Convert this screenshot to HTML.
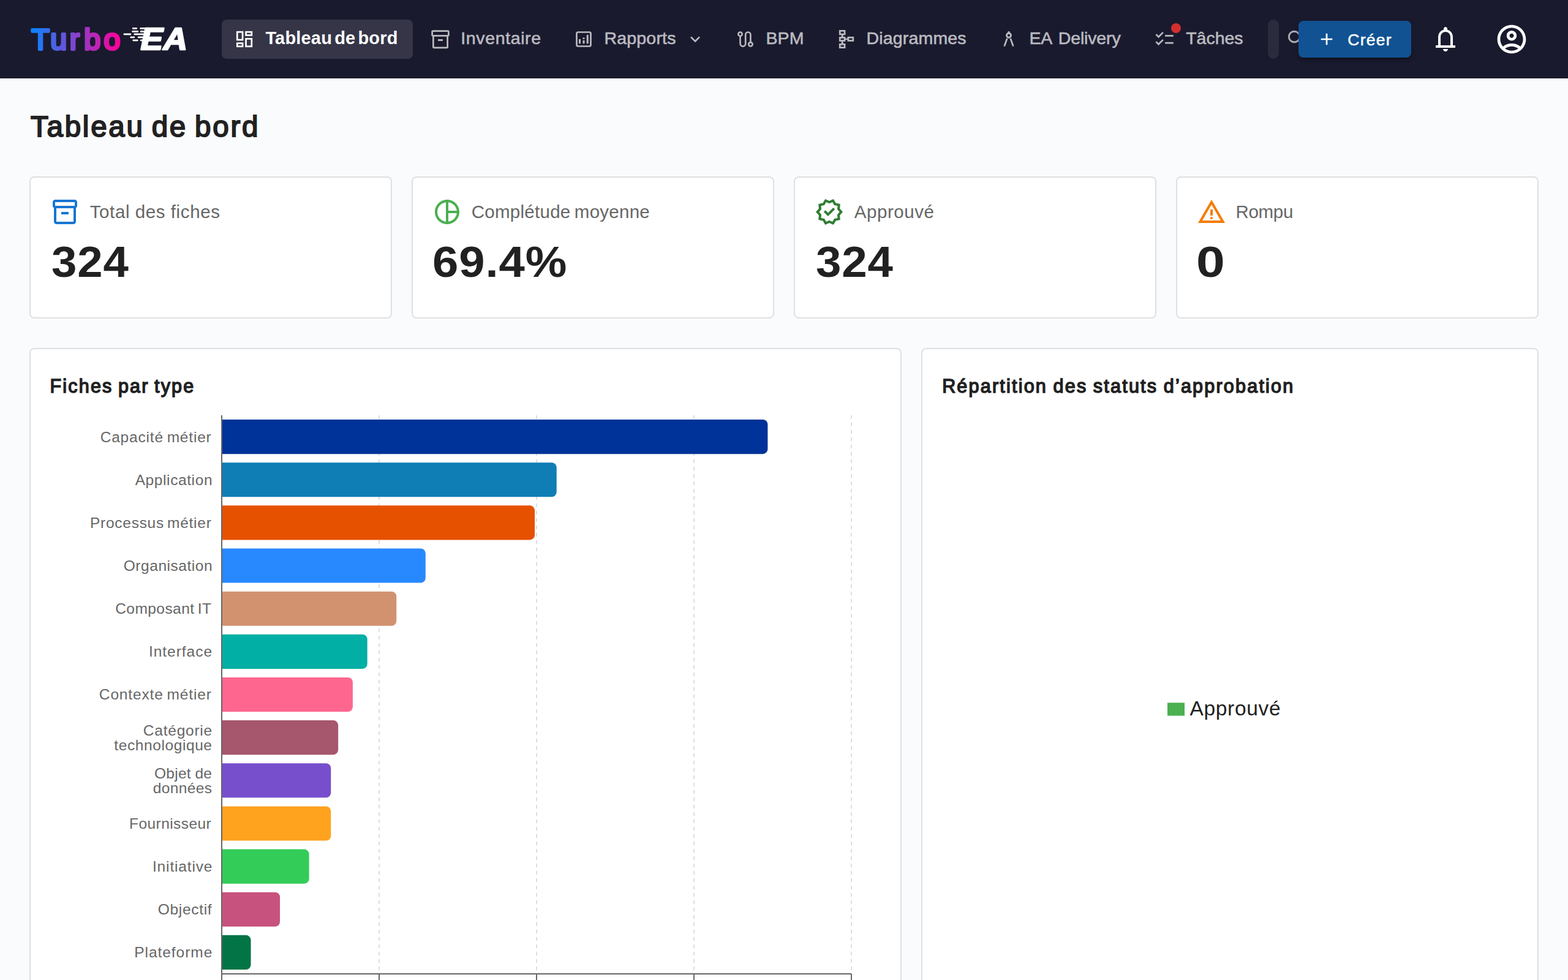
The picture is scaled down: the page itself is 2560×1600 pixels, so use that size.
<!DOCTYPE html>
<html lang="fr">
<head>
<meta charset="utf-8">
<title>Turbo EA – Tableau de bord</title>
<style>
*{box-sizing:border-box;margin:0;padding:0}
html,body{width:2560px;height:1600px;overflow:hidden}
@media (max-width:1500px){html{zoom:.5}}
body{position:relative;background:#fafbfc;font-family:"Liberation Sans",sans-serif;color:#212121;-webkit-font-smoothing:antialiased}
.t{position:absolute;white-space:nowrap;display:block;font-weight:400}
.ic{position:absolute;display:block}
a{text-decoration:none;color:inherit}
header{position:absolute;left:0;top:0;width:2560px;height:128px;background:#1a1a2e;color:#fff}
.logo{position:absolute;left:40px;top:24px;width:280px;height:80px}
.logo svg{display:block}
nav a{position:absolute;top:32px;height:64px;border-radius:8px}
nav a.active{background:rgba(255,255,255,.12)}
.badge{position:absolute;width:16px;height:16px;border-radius:50%;background:#d32f2f}
.pill{position:absolute;left:2070px;top:32px;width:18px;height:64px;border-radius:9px;background:rgba(255,255,255,.08)}
.create{position:absolute;left:2120px;top:34px;width:184px;height:60px;border:0;border-radius:8px;background:#115293;color:#fff;
 box-shadow:0 6px 2px -4px rgba(0,0,0,.2),0 4px 4px 0 rgba(0,0,0,.14),0 2px 10px 0 rgba(0,0,0,.12);font-family:inherit}
main{position:absolute;left:0;top:128px;width:2560px;height:1472px}
.card{position:absolute;background:#fff;border:2px solid #e0e0e0;border-radius:8px}
.kpi{top:160px;width:592px;height:232px}
.chart{top:440px;height:1100px}
.chart svg.plot{position:absolute;left:-2px;top:-2px;display:block}
.chart svg.plot text{font-family:"Liberation Sans",sans-serif}
</style>
</head>
<body>
<header>
<a class="logo" title="Turbo EA"><svg width="280" height="80" viewBox="40 24 280 80" role="img" aria-label="Turbo EA">
<defs><linearGradient id="tg" gradientUnits="userSpaceOnUse" x1="52" y1="0" x2="196" y2="0">
<stop offset="0" stop-color="#0a84ff"/><stop offset="1" stop-color="#ff0099"/></linearGradient></defs>
<text x="51.3 82.2 113.8 137.3 169.4" y="80.6" font-family="Liberation Sans, sans-serif" font-size="48.5" font-weight="400" fill="url(#tg)" stroke="url(#tg)" stroke-width="4" stroke-linejoin="round" stroke-linecap="round">Turbo</text>
<g fill="none" stroke="#fff" stroke-width="2.8" stroke-linecap="round">
<path d="M217.2 46.3H222.8M229.6 46.3H240"/>
<path d="M216.7 51.4H224.8M230.1 51.4H240"/>
<path d="M202.8 55.8H212.9M219.7 55.8H244"/>
<path d="M213.7 60.8H218.8M226.1 60.8H238"/>
<path d="M217.7 65.8H224.3M230.1 65.8H238"/>
</g>
<text transform="translate(229.4 81.4) scale(1.085 1)" font-family="Liberation Sans, sans-serif" font-size="50.5" font-weight="700" font-style="italic" fill="#fff" stroke="#fff" stroke-width="2.4" stroke-linejoin="round" style="letter-spacing:0.5px">EA</text>
</svg></a>
<nav>
<a class="active" style="left:362px;width:312px"><svg class="ic" style="left:19.10px;top:13.90px;width:36px;height:36px;color:#fff" viewBox="-18.0 -18.0 36 36" aria-hidden="true"><g fill="none" stroke="currentColor" stroke-width="2.7"><rect x="-11.75" y="-11.80" width="8.80" height="12.80"/><rect x="-11.75" y="6.65" width="8.80" height="5.10"/><rect x="2.55" y="-11.80" width="9.25" height="5.25"/><rect x="2.55" y="-0.65" width="9.25" height="12.40"/></g></svg><span class="t" style="left:71.38px;top:13.00px;font-size:29px;line-height:35px;letter-spacing:0.18px;word-spacing:-4.17px;font-weight:700;color:#fff;">Tableau de bord</span></a>
<a style="left:682px;width:224px"><svg class="ic" style="left:19.25px;top:14.00px;width:36px;height:36px;color:#babac0" viewBox="-18.0 -18.0 36 36" aria-hidden="true"><g fill="none" stroke="currentColor" stroke-width="2.7" stroke-linejoin="round"><rect x="-13.40" y="-13.40" width="26.80" height="7.80" rx="1.3"/><path d="M-11.65,-5.6V12.40a1.4,1.4 0 0 0 1.4,1.4H10.25a1.4,1.4 0 0 0 1.4,-1.4V-5.6"/></g><rect x="-4" y="0" width="8" height="2.9" fill="currentColor"/></svg><span class="t" style="left:70.34px;top:13.00px;font-size:28.5px;line-height:34px;letter-spacing:0.62px;color:#babac0;-webkit-text-stroke:0.6px;">Inventaire</span></a>
<a style="left:914px;width:257px"><svg class="ic" style="left:21.10px;top:14.10px;width:36px;height:36px;color:#babac0" viewBox="-18.0 -18.0 36 36" aria-hidden="true"><rect x="-11.5" y="-11.5" width="23" height="23" rx="2.2" fill="none" stroke="currentColor" stroke-width="2.7"/><g fill="currentColor"><rect x="-8.00" y="-0.10" width="3.00" height="7.30"/><rect x="-1.50" y="1.90" width="3.00" height="5.30"/><rect x="-1.50" y="-2.60" width="3.00" height="2.50"/><rect x="4.70" y="-7.10" width="3.00" height="14.30"/></g></svg><span class="t" style="left:72.40px;top:13.00px;font-size:28.5px;line-height:34px;letter-spacing:0.21px;color:#babac0;-webkit-text-stroke:0.6px;">Rapports</span><svg class="ic" style="left:205px;top:16px;width:32px;height:32px;" viewBox="0 0 24 24" fill="#babac0" aria-hidden="true"><path d="M16.59 8.59L12 13.17 7.41 8.59 6 10l6 6 6-6z"/></svg></a>
<a style="left:1179px;width:156px"><svg class="ic" style="left:20.00px;top:14.10px;width:36px;height:36px;color:#babac0" viewBox="-18.0 -18.0 36 36" aria-hidden="true"><g fill="none" stroke="currentColor" stroke-width="2.6"><circle cx="-8.5" cy="-8.35" r="3.2"/><circle cx="8.4" cy="8.3" r="3.2"/><path d="M-8.5,-5.15V7.25a4.35,4.35 0 0 0 8.7,0V-7.45a4.1,4.1 0 0 1 8.2,0V5.1"/></g></svg><span class="t" style="left:71.40px;top:13.00px;font-size:28.5px;line-height:34px;letter-spacing:0.17px;color:#babac0;-webkit-text-stroke:0.6px;">BPM</span></a>
<a style="left:1343px;width:258px"><svg class="ic" style="left:21.10px;top:14.25px;width:36px;height:36px;color:#babac0" viewBox="-18.0 -18.0 36 36" aria-hidden="true"><g fill="none" stroke="currentColor" stroke-width="2.7"><rect x="-10.75" y="-13.65" width="7.80" height="5.55"/><rect x="-10.75" y="-2.65" width="7.80" height="5.05"/><rect x="-10.75" y="8.35" width="7.80" height="5.30"/><rect x="2.75" y="-2.80" width="8.05" height="5.20"/></g><g fill="currentColor"><rect x="-8.35" y="-7.20" width="3.00" height="3.60"/><rect x="-8.35" y="3.30" width="3.00" height="4.10"/><rect x="-2.00" y="-1.45" width="3.80" height="2.50"/></g></svg><span class="t" style="left:71.50px;top:13.00px;font-size:28.5px;line-height:34px;letter-spacing:0.17px;color:#babac0;-webkit-text-stroke:0.6px;">Diagrammes</span></a>
<a style="left:1609px;width:245px"><svg class="ic" style="left:20.10px;top:14.00px;width:36px;height:36px;color:#babac0" viewBox="-18.0 -18.0 36 36" aria-hidden="true"><rect x="-1.55" y="-12.8" width="3.1" height="3.6" fill="currentColor"/><circle cx="0" cy="-6.25" r="3.45" fill="none" stroke="currentColor" stroke-width="2.9"/><g fill="currentColor"><path d="M-3.95,-1.75 L-1.45,-0.75 L-5.60,10.85 L-7.75,12.60 L-8.20,9.90z"/><path d="M3.95,-1.75 L1.45,-0.75 L5.60,10.85 L7.75,12.60 L8.20,9.90z"/></g></svg><span class="t" style="left:71.50px;top:13.00px;font-size:28.5px;line-height:34px;letter-spacing:-0.15px;word-spacing:3.35px;color:#babac0;-webkit-text-stroke:0.6px;">EA Delivery</span></a>
<a style="left:1862px;width:191px"><svg class="ic" style="left:21.20px;top:14.00px;width:36px;height:36px;color:#babac0" viewBox="-18.0 -18.0 36 36" aria-hidden="true"><g fill="none" stroke="currentColor" stroke-width="2.7"><path d="M-13.6,-7.85L-9.5,-3.75L-2.1,-11.15"/><path d="M-13.6,4.15L-9.5,8.25L-2.1,0.85"/></g><g fill="currentColor"><rect x="1.10" y="-7.00" width="13.70" height="2.75"/><rect x="1.10" y="4.75" width="13.70" height="2.75"/></g></svg><span class="t" style="left:74.23px;top:13.00px;font-size:28.5px;line-height:34px;letter-spacing:-0.02px;color:#babac0;-webkit-text-stroke:0.6px;">Tâches</span><i class="badge" style="left:50px;top:6px"></i></a>
</nav>
<div class="pill"></div>
<svg class="ic" style="left:2097px;top:44px;width:40px;height:40px" viewBox="2097 44 40 40" aria-hidden="true" fill="none" stroke="rgba(255,255,255,0.64)" stroke-width="2.9"><circle cx="2113.1" cy="60" r="8.8"/><path d="M2119.6 66.5 2130.6 77.5"/></svg>
<button class="create"><svg class="ic" style="left:30.09999999999991px;top:14.100000000000001px;width:32px;height:32px;" viewBox="0 0 24 24" fill="#fff" aria-hidden="true"><path d="M19 13h-6v6h-2v-6H5v-2h6V5h2v6h6v2z"/></svg><span class="t" style="left:80.29px;top:15.00px;font-size:26.5px;line-height:32px;letter-spacing:1.28px;color:#fff;-webkit-text-stroke:0.55px;">Créer</span></button>
<svg class="ic" style="left:2336px;top:40px;width:48px;height:48px;" viewBox="0 0 24 24" fill="#fff" aria-hidden="true"><path d="M4 19v-2h2v-7q0-2.075 1.25-3.6875T10.5 4.2v-.7q0-.625.4375-1.0625T12 2q.625 0 1.0625.4375T13.5 3.5v.7q2 .5 3.25 2.1125T18 10v7h2v2H4Zm8 3q-.825 0-1.4125-.5875T10 20h4q0 .825-.5875 1.4125T12 22ZM8 17h8v-7q0-1.65-1.175-2.825T12 6q-1.65 0-2.825 1.175T8 10v7Z"/></svg>
<svg class="ic" style="left:2440px;top:36px;width:56px;height:56px;" viewBox="0 0 24 24" fill="#fff" aria-hidden="true"><path d="M12 2C6.48 2 2 6.48 2 12s4.48 10 10 10 10-4.48 10-10S17.52 2 12 2zM7.35 18.5C8.66 17.56 10.26 17 12 17s3.34.56 4.65 1.5c-1.31.94-2.91 1.5-4.65 1.5s-3.34-.56-4.65-1.5zm10.79-1.38C16.45 15.8 14.32 15 12 15s-4.45.8-6.14 2.12C4.7 15.73 4 13.95 4 12c0-4.42 3.58-8 8-8s8 3.58 8 8c0 1.95-.7 3.73-1.86 5.12zM12 6c-1.93 0-3.5 1.57-3.5 3.5S10.07 13 12 13s3.5-1.57 3.5-3.5S13.93 6 12 6zm0 5c-.83 0-1.5-.67-1.5-1.5S11.17 8 12 8s1.5.67 1.5 1.5S12.83 11 12 11z"/></svg>
</header>
<main>
<h1 class="t" style="left:50.00px;top:50.00px;font-size:47.5px;line-height:57px;letter-spacing:2.76px;word-spacing:-3.97px;color:#212121;-webkit-text-stroke:2.0px;">Tableau de bord</h1>
<section class="card kpi" style="left:48px"><svg class="ic" style="left:32px;top:32px;width:48px;height:48px;" viewBox="0 0 24 24" fill="#1976d2" aria-hidden="true"><path d="M20 2H4c-1 0-2 .9-2 2v3.01c0 .72.43 1.34 1 1.69V20c0 1.1 1.1 2 2 2h14c.9 0 2-.9 2-2V8.7c.57-.35 1-.97 1-1.69V4c0-1.1-1-2-2-2zm-1 18H5V9h14v11zm1-13H4V4h16v3zM9 12h6v2H9z"/></svg><span class="t" style="left:96.63px;top:38.00px;font-size:29.5px;line-height:35px;letter-spacing:0.65px;word-spacing:-0.31px;color:#666;">Total des fiches</span><strong class="t" style="left:33.66px;top:95.00px;font-size:71px;line-height:85px;letter-spacing:0.8px;font-weight:700;color:#212121;transform:scaleX(1.048);transform-origin:0 0;">324</strong></section>
<section class="card kpi" style="left:672px"><svg class="ic" style="left:32px;top:32px;width:48px;height:48px;" viewBox="0 0 24 24" fill="#4caf50" aria-hidden="true"><path d="M12 2C6.5 2 2 6.5 2 12s4.5 10 10 10 10-4.5 10-10S17.5 2 12 2zm1 2.07c3.61.45 6.48 3.33 6.93 6.93H13V4.07zM4 12c0-4.06 3.07-7.44 7-7.93v15.87c-3.93-.5-7-3.88-7-7.94zm9 7.93V13h6.93c-.45 3.61-3.32 6.48-6.93 6.93z"/></svg><span class="t" style="left:95.74px;top:38.00px;font-size:29.5px;line-height:35px;letter-spacing:0.27px;word-spacing:-2.18px;color:#666;">Complétude moyenne</span><strong class="t" style="left:31.96px;top:95.00px;font-size:71px;line-height:85px;letter-spacing:0.88px;font-weight:700;color:#212121;transform:scaleX(1.071);transform-origin:0 0;">69.4%</strong></section>
<section class="card kpi" style="left:1296px"><svg class="ic" style="left:32px;top:32px;width:48px;height:48px;" viewBox="0 0 24 24" fill="#2e7d32" aria-hidden="true"><path d="M23 11.99l-2.44-2.79.34-3.69-3.61-.82-1.89-3.2L12 2.96 8.6 1.5 6.71 4.69 3.1 5.5l.34 3.7L1 11.99l2.44 2.79-.34 3.7 3.61.82L8.6 22.5l3.4-1.47 3.4 1.46 1.89-3.19 3.61-.82-.34-3.69 2.44-2.8zm-3.95 1.48l-.56.65.08.85.18 1.95-1.9.43-.84.19-.44.74-.99 1.68-1.78-.77-.8-.34-.79.34-1.78.77-.99-1.67-.44-.74-.84-.19-1.9-.43.18-1.96.08-.85-.56-.65-1.29-1.47 1.29-1.48.56-.65-.09-.86-.18-1.94 1.9-.43.84-.19.44-.74.99-1.68 1.78.77.8.34.79-.34 1.78-.77.99 1.68.44.74.84.19 1.9.43-.18 1.95-.08.85.56.65 1.29 1.47-1.28 1.48zM10.95 15.55 16.6 9.9 15.2 8.45 10.95 12.7 8.8 10.6 7.4 12z"/></svg><span class="t" style="left:96.83px;top:38.00px;font-size:29.5px;line-height:35px;letter-spacing:0.53px;color:#666;">Approuvé</span><strong class="t" style="left:33.56px;top:95.00px;font-size:71px;line-height:85px;letter-spacing:0.84px;font-weight:700;color:#212121;transform:scaleX(1.049);transform-origin:0 0;">324</strong></section>
<section class="card kpi" style="left:1920px"><svg class="ic" style="left:32px;top:32px;width:48px;height:48px;" viewBox="0 0 24 24" fill="#f57c00" aria-hidden="true"><path d="M12 5.99L19.53 19H4.47L12 5.99M12 2L1 21h22L12 2zM11 10h2v5h-2zM12 18q.425 0 .7125-.2875T13 17q0-.425-.2875-.7125T12 16q-.425 0-.7125.2875T11 17q0 .425.2875.7125T12 18z"/></svg><span class="t" style="left:95.48px;top:38.00px;font-size:29.5px;line-height:35px;letter-spacing:-0.31px;color:#666;">Rompu</span><strong class="t" style="left:31.22px;top:95.00px;font-size:71px;line-height:85px;letter-spacing:0px;font-weight:700;color:#212121;transform:scaleX(1.185);transform-origin:0 0;">0</strong></section>
<section class="card chart" style="left:48px;width:1424px"><h2 class="t" style="left:31.53px;top:42.00px;font-size:30.5px;line-height:37px;letter-spacing:2.2px;word-spacing:-2.3px;color:#212121;-webkit-text-stroke:1.5px;">Fiches par type</h2><svg class="plot" width="1424" height="1032" viewBox="48 568 1424 1032">
<g stroke="#dedede" stroke-width="2" stroke-dasharray="6 6" fill="none">
<line x1="619" y1="678" x2="619" y2="1590"/>
<line x1="876" y1="678" x2="876" y2="1590"/>
<line x1="1133" y1="678" x2="1133" y2="1590"/>
<line x1="1390" y1="678" x2="1390" y2="1590"/>
</g>
<g>
<path d="M362,685.02h883.38a8,8 0 0 1 8,8v40.12a8,8 0 0 1 -8,8h-883.38z" fill="#003399"/>
<path d="M362,755.17h538.71a8,8 0 0 1 8,8v40.12a8,8 0 0 1 -8,8h-538.71z" fill="#0f7eb5"/>
<path d="M362,825.32h503.06a8,8 0 0 1 8,8v40.12a8,8 0 0 1 -8,8h-503.06z" fill="#e65100"/>
<path d="M362,895.48h324.78a8,8 0 0 1 8,8v40.12a8,8 0 0 1 -8,8h-324.78z" fill="#2889ff"/>
<path d="M362,965.63h277.24a8,8 0 0 1 8,8v40.12a8,8 0 0 1 -8,8h-277.24z" fill="#d29270"/>
<path d="M362,1035.78h229.70a8,8 0 0 1 8,8v40.12a8,8 0 0 1 -8,8h-229.70z" fill="#02afa4"/>
<path d="M362,1105.94h205.93a8,8 0 0 1 8,8v40.12a8,8 0 0 1 -8,8h-205.93z" fill="#fe6690"/>
<path d="M362,1176.09h182.16a8,8 0 0 1 8,8v40.12a8,8 0 0 1 -8,8h-182.16z" fill="#a6566d"/>
<path d="M362,1246.25h170.28a8,8 0 0 1 8,8v40.12a8,8 0 0 1 -8,8h-170.28z" fill="#774fcc"/>
<path d="M362,1316.40h170.28a8,8 0 0 1 8,8v40.12a8,8 0 0 1 -8,8h-170.28z" fill="#ffa31f"/>
<path d="M362,1386.55h134.62a8,8 0 0 1 8,8v40.12a8,8 0 0 1 -8,8h-134.62z" fill="#33cc58"/>
<path d="M362,1456.71h87.08a8,8 0 0 1 8,8v40.12a8,8 0 0 1 -8,8h-87.08z" fill="#c7527d"/>
<path d="M362,1526.86h39.54a8,8 0 0 1 8,8v40.12a8,8 0 0 1 -8,8h-39.54z" fill="#027446"/>
</g>
<g stroke="#666" stroke-width="2" fill="none"><line x1="362" y1="678" x2="362" y2="1591"/><line x1="362" y1="1590" x2="1390" y2="1590"/>
<line x1="362" y1="1590" x2="362" y2="1602"/>
<line x1="619" y1="1590" x2="619" y2="1602"/>
<line x1="876" y1="1590" x2="876" y2="1602"/>
<line x1="1133" y1="1590" x2="1133" y2="1602"/>
<line x1="1390" y1="1590" x2="1390" y2="1602"/>
</g>
<g>
<text x="163.66" y="722" fill="#666" style="font-size:24.5px;letter-spacing:0.81px;word-spacing:-1.8px;">Capacité métier</text>
<text x="220.67" y="792" fill="#666" style="font-size:24.5px;letter-spacing:0.6px;">Application</text>
<text x="147.00" y="862" fill="#666" style="font-size:24.5px;letter-spacing:0.73px;word-spacing:-2.4px;">Processus métier</text>
<text x="201.76" y="932" fill="#666" style="font-size:24.5px;letter-spacing:0.54px;">Organisation</text>
<text x="188.16" y="1002" fill="#666" style="font-size:24.5px;letter-spacing:0.45px;word-spacing:-1.93px;">Composant IT</text>
<text x="242.96" y="1072" fill="#666" style="font-size:24.5px;letter-spacing:0.97px;">Interface</text>
<text x="161.86" y="1142" fill="#666" style="font-size:24.5px;letter-spacing:0.84px;word-spacing:-1.72px;">Contexte métier</text>
<text x="233.86" y="1201" fill="#666" style="font-size:24.5px;letter-spacing:0.76px;">Catégorie</text>
<text x="186.34" y="1225" fill="#666" style="font-size:24.5px;letter-spacing:0.59px;">technologique</text>
<text x="251.96" y="1271" fill="#666" style="font-size:24.5px;letter-spacing:0.28px;word-spacing:-0.54px;">Objet de</text>
<text x="249.70" y="1295" fill="#666" style="font-size:24.5px;letter-spacing:0.4px;">données</text>
<text x="211.10" y="1353" fill="#666" style="font-size:24.5px;letter-spacing:0.43px;">Fournisseur</text>
<text x="248.96" y="1423" fill="#666" style="font-size:24.5px;letter-spacing:0.85px;">Initiative</text>
<text x="257.86" y="1493" fill="#666" style="font-size:24.5px;letter-spacing:0.66px;">Objectif</text>
<text x="219.20" y="1563" fill="#666" style="font-size:24.5px;letter-spacing:0.96px;">Plateforme</text>
</g>
</svg></section>
<section class="card chart" style="left:1504px;width:1008px"><h2 class="t" style="left:32.13px;top:42.00px;font-size:30.5px;line-height:37px;letter-spacing:2.22px;word-spacing:-1.2px;color:#212121;-webkit-text-stroke:1.5px;">Répartition des statuts d’approbation</h2><svg class="plot" width="1008" height="1032" viewBox="1504 568 1008 1032"><rect x="1906" y="1147.3" width="28" height="21.2" fill="#4caf50"/><text x="1942.53" y="1168" fill="#212121" style="font-size:33.5px;letter-spacing:0.66px;">Approuvé</text></svg></section>
</main>
</body>
</html>
